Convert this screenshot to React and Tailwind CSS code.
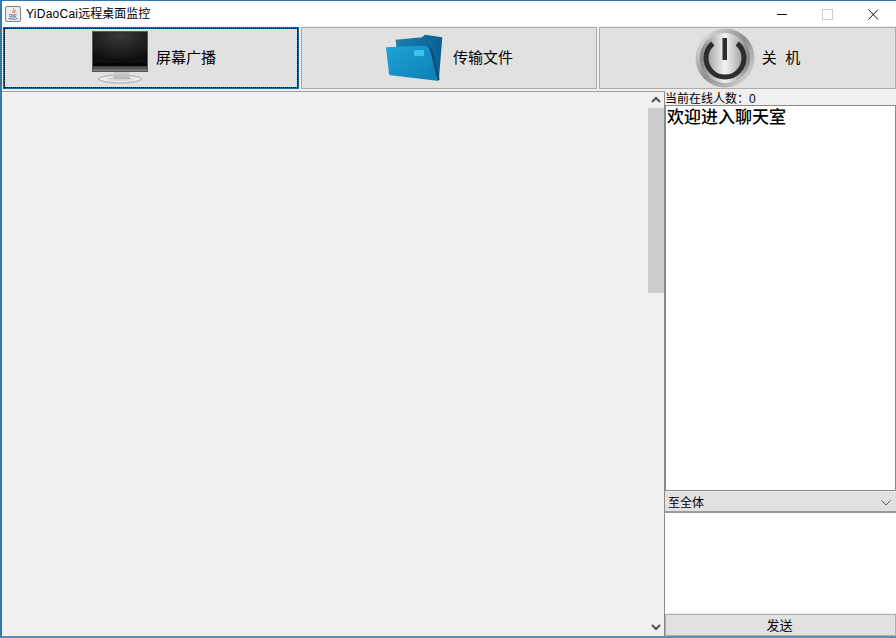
import { useId } from "react";

const cjk = "font-['Liberation_Sans','Noto_Sans_CJK_SC',sans-serif]";

function JavaIcon() {
  return (
    <svg width="16" height="16" viewBox="0 0 16 16">
      <rect x="0.5" y="0.5" width="15" height="15" rx="1.5" fill="#ececec" stroke="#7d8085" />
      <path d="M8.500 2.500c1.500 1.500-2 2.500-.5 4.500M10 4c.8 1-1.400 1.600-.5 3" fill="none" stroke="#d8622a" strokeWidth="1" />
      <path d="M4 8.500c2 .8 6 .8 7.500 0M4.500 10.500c2 .7 5 .7 6.500 0M3.500 12.500c3 1 7 1 9 0" fill="none" stroke="#4a6f98" strokeWidth="1" />
    </svg>
  );
}

function MonitorIcon() {
  const id = useId();
  return (
    <svg width="58" height="56" viewBox="0 0 58 56">
      <defs>
        <radialGradient id={id + "s"} cx="50%" cy="12%" r="75%">
          <stop offset="0%" stopColor="#3a3a3a" />
          <stop offset="100%" stopColor="#0f0f0f" />
        </radialGradient>
        <linearGradient id={id + "b"} x1="0" y1="0" x2="0" y2="1">
          <stop offset="0%" stopColor="#d0d0d0" />
          <stop offset="100%" stopColor="#b8b8b8" />
        </linearGradient>
        <linearGradient id={id + "z"} x1="0" y1="0" x2="0" y2="1">
          <stop offset="0%" stopColor="#3a3a3a" />
          <stop offset="100%" stopColor="#808080" />
        </linearGradient>
      </defs>
      <ellipse cx="29" cy="49" rx="21" ry="4" fill="#ececec" stroke="#bdbdbd" strokeWidth="1.500" />
      <ellipse cx="29" cy="49" rx="13" ry="2" fill="#d6d6d6" />
      <path d="M23 41h15l1 8H22z" fill={`url(#${id}b)`} />
      <rect x="1" y="1" width="56" height="41" fill="#5a5a5a" />
      <rect x="2" y="2" width="54" height="33" fill={`url(#${id}s)`} />
      <rect x="2" y="33" width="54" height="3" fill="#050505" />
      <rect x="2" y="36" width="54" height="5" fill={`url(#${id}z)`} />
    </svg>
  );
}

function FolderIcon() {
  const id = useId();
  return (
    <svg width="58" height="48" viewBox="0 0 58 48">
      <defs>
        <linearGradient id={id + "f"} x1="0" y1="0" x2="1" y2="1">
          <stop offset="0%" stopColor="#1fa3d8" />
          <stop offset="100%" stopColor="#0c7fb4" />
        </linearGradient>
        <linearGradient id={id + "k"} x1="0" y1="0" x2="1" y2="0">
          <stop offset="0%" stopColor="#1a80b4" />
          <stop offset="100%" stopColor="#0b5f90" />
        </linearGradient>
      </defs>
      <path d="M10.700 5.700 37 3.300 40 .7 57.300 3.300 54 44 12 20z" fill={`url(#${id}k)`} />
      <path d="M39 11.700c3.500-.2 6 3 6.700 7.300L52.300 46.700 54.500 46 54 42 47 14z" fill="#094f78" />
      <path d="M1 13.300 39 11.700c3.500-.2 6 3 6.700 7.300L52.300 46.700 5.500 41.300c-1 0-1.300-.6-1.500-1.500z" fill={`url(#${id}f)`} />
      <rect x="29" y="16" width="10" height="6" rx="1" fill="#35c6ee" />
    </svg>
  );
}

function PowerIcon() {
  const id = useId();
  return (
    <svg width="60" height="60" viewBox="0 0 60 60">
      <defs>
        <linearGradient id={id + "r"} x1="0" y1="0" x2="1" y2="1">
          <stop offset="0%" stopColor="#f4f4f4" />
          <stop offset="50%" stopColor="#8c8c8c" />
          <stop offset="100%" stopColor="#e6e6e6" />
        </linearGradient>
        <linearGradient id={id + "d"} x1="0" y1="0" x2="1" y2="0">
          <stop offset="0%" stopColor="#7f7f7f" />
          <stop offset="50%" stopColor="#f4f4f4" />
          <stop offset="100%" stopColor="#7f7f7f" />
        </linearGradient>
      </defs>
      <circle cx="30" cy="30" r="29.500" fill={`url(#${id}r)`} />
      <circle cx="30" cy="30" r="25" fill={`url(#${id}d)`} />
      <path d="M17.800 15.500A19 19 0 1 0 42.200 15.500" fill="none" stroke="#2d2d2d" strokeWidth="5" />
      <rect x="27.500" y="10" width="4.500" height="22" fill="#2d2d2d" />
    </svg>
  );
}

function ToolButton({ icon, label, className }) {
  return (
    <button className={`h-[62px] shrink-0 flex items-center justify-center bg-[#e1e1e1] text-[15px] text-black ${cjk} ${className}`}>
      {icon}
      <span className="whitespace-pre">{label}</span>
    </button>
  );
}

export default function App() {
  return (
    <div className={`w-[896px] h-[638px] flex flex-col bg-[#f0f0f0] border-t border-b-2 border-l-2 border-t-[#2f78b4] border-b-[#5a8fb8] border-l-[#2f78b4] overflow-hidden ${cjk}`}>
      {/* TITLE BAR */}
      <div className="h-[25px] shrink-0 bg-white flex items-center text-black">
        <div className="ml-[3px]"><JavaIcon /></div>
        <span className="ml-[5px] text-[12px]"><span className="tracking-[0.25px]">YiDaoCai</span>远程桌面监控</span>
        <div className="ml-auto flex items-center">
          <svg width="46" height="24" viewBox="0 0 46 24"><path d="M19 12.500h10" stroke="#111" /></svg>
          <svg width="46" height="24" viewBox="0 0 46 24"><rect x="18.500" y="7.500" width="10" height="10" fill="none" stroke="#ccc" /></svg>
          <svg width="46" height="24" viewBox="0 0 46 24"><path d="M18.500 7.500l9.500 10M28 7.500l-9.500 10" stroke="#111" /></svg>
        </div>
      </div>

      {/* TOOLBAR */}
      <div className="shrink-0 flex pl-px pt-px pb-[2px]">
        <ToolButton
          icon={<MonitorIcon />}
          label="屏幕广播"
          className="w-[296px] pl-[5px] gap-[7px] border-2 border-[#0f6aa8] outline-1 outline-dotted -outline-offset-2 outline-black"
        />
        <ToolButton icon={<FolderIcon />} label="传输文件" className="w-[296px] ml-[2px] gap-[10px] border border-[#adadad]" />
        <ToolButton icon={<PowerIcon />} label="关  机" className="w-[297px] ml-[2px] gap-[7px] border border-[#adadad]" />
      </div>

      {/* MAIN */}
      <div className="flex-1 min-h-0 flex">
        <div className="flex-1 border-t border-[#a0a0a0] bg-[#f0f0f0]" />

        {/* scrollbar */}
        <div className="w-[17px] shrink-0 border-t border-r border-t-[#a0a0a0] border-r-[#8a8a8a] bg-[#f0f0f0] flex flex-col items-center">
          <svg className="shrink-0" width="16" height="16" viewBox="0 0 16 16">
            <path d="M4 10l4-4 4 4" fill="none" stroke="#505050" strokeWidth="2" />
          </svg>
          <div className="w-full h-[185px] bg-[#cdcdcd]" />
          <svg className="mt-auto mb-[1px] shrink-0" width="16" height="16" viewBox="0 0 16 16">
            <path d="M4 6l4 4 4-4" fill="none" stroke="#505050" strokeWidth="2" />
          </svg>
        </div>

        {/* right column */}
        <div className="w-[231px] shrink-0 flex flex-col">
          <div className="h-[14px] shrink-0 text-[12px] leading-[16px] text-black whitespace-nowrap">当前在线人数：0</div>
          <div className="flex-1 min-h-0 bg-white border border-[#8a8a8a] px-px text-[17px] leading-[24px] font-medium text-black">
            欢迎进入聊天室
          </div>
          <div className="h-[22px] shrink-0 bg-[#e1e1e1] border-t border-t-[#f0f0f0] border-b-2 border-b-[#9a9a9a] flex items-center justify-between px-[3px] pt-[3px] text-[12px] text-black">
            <span>至全体</span>
            <svg width="12" height="8" viewBox="0 0 12 8" className="mr-[1px]">
              <path d="M1.500 1.500 6 6l4.500-4.500" fill="none" stroke="#555" />
            </svg>
          </div>
          <div className="h-[100px] shrink-0 bg-white" />
          <button className="h-[22px] shrink-0 mt-px pt-[2px] pr-[2px] bg-[#e1e1e1] border border-[#adadad] text-[13px] leading-[18px] text-black">发送</button>
        </div>
      </div>
    </div>
  );
}
